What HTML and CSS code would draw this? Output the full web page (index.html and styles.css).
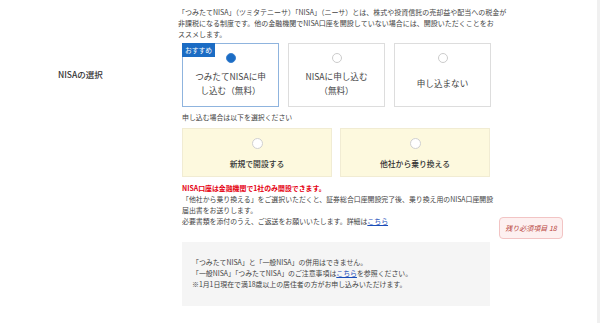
FILE: index.html
```html
<!DOCTYPE html>
<html lang="ja">
<head>
<meta charset="utf-8">
<link rel="stylesheet" href="styles.css">
</head>
<body>
<div class="page">
  <div class="main">
    <div class="form">
      <p class="intro">「つみたてNISA」（ツミタテニーサ）「NISA」（ニーサ）とは、株式や投資信託の売却益や配当への税金が<br>非課税になる制度です。他の金融機関でNISA口座を開設していない場合には、開設いただくことをお<br>ススメします。</p>
      <div class="label">NISAの選択</div>
      <div class="choices">
        <div class="choice selected">
          <span class="rec">おすすめ</span>
          <span class="radio on"></span>
          <span class="choice-text">つみたてNISAに申<br>し込む（無料）</span>
        </div>
        <div class="choice">
          <span class="radio"></span>
          <span class="choice-text">NISAに申し込む<br>（無料）</span>
        </div>
        <div class="choice">
          <span class="radio"></span>
          <span class="choice-text">申し込まない</span>
        </div>
      </div>
      <div class="rest">
        <p class="hint">申し込む場合は以下を選択ください</p>
        <div class="subchoices">
          <div class="sub">
            <span class="radio"></span>
            <span class="sub-text">新規で開設する</span>
          </div>
          <div class="sub">
            <span class="radio"></span>
            <span class="sub-text">他社から乗り換える</span>
          </div>
        </div>
        <div class="note">
          <p class="warn">NISA口座は金融機関で1社のみ開設できます。</p>
          <p>「他社から乗り換える」をご選択いただくと、証券総合口座開設完了後、乗り換え用のNISA口座開設<br>届出書をお送りします。<br>必要書類を添付のうえ、ご返送をお願いいたします。詳細は<a href="#">こちら</a></p>
        </div>
        <div class="info">
          <p>「つみたてNISA」と「一般NISA」の併用はできません。<br>「一般NISA」「つみたてNISA」のご注意事項は<a href="#">こちら</a>を参照ください。<br>※1月1日現在で満18歳以上の居住者の方がお申し込みいただけます。</p>
        </div>
      </div>
    </div>
    <div class="remain">残り必須項目 18</div>
  </div>
  <div class="track"></div>
</div>
</body>
</html>
```

FILE: styles.css
```css
html, body {
  margin: 0;
  padding: 0;
  background: #fff;
}
body {
  font-family: "Noto Sans CJK JP", "Noto Sans", sans-serif;
  color: #333;
}
p { margin: 0; }

.page {
  display: flex;
  height: 323px;
  overflow: hidden;
}
.main {
  position: relative;
  flex: 1;
  padding-top: 7px;
}
.track {
  width: 3px;
  background: #f0f0f0;
}

.form {
  display: grid;
  grid-template-columns: 182px 309px;
}
.intro {
  grid-column: 2;
  grid-row: 1;
  margin-left: -4px;
  font-size: 7px;
  line-height: 11px;
  white-space: nowrap;
  color: #444;
}
.label {
  grid-column: 1;
  grid-row: 2;
  align-self: center;
  padding-left: 58px;
  font-size: 8.5px;
  font-weight: 500;
  color: #333;
}
.choices {
  grid-column: 2;
  grid-row: 2;
  margin-top: 3px;
  display: grid;
  grid-template-columns: repeat(3, 1fr);
  gap: 9px;
}
.choice {
  position: relative;
  height: 64px;
  box-sizing: border-box;
  border: 1px solid #ddd;
  background: #fff;
  display: flex;
  flex-direction: column;
  align-items: center;
  padding: 9px 0 4px;
}
.choice.selected {
  border-color: #8fb4de;
}
.rec {
  position: absolute;
  left: -1px;
  top: -1px;
  width: 33px;
  height: 14px;
  background: #1b6cc4;
  color: #fff;
  font-size: 6.8px;
  line-height: 14px;
  text-align: center;
}
.radio {
  display: block;
  width: 10px;
  height: 10px;
  border-radius: 50%;
  border: 1px solid #ccc;
  background: #fff;
  box-sizing: border-box;
  flex: none;
}
.radio.on {
  background: #1b6cc4;
  border-color: #3d82cf;
}
.choice-text {
  flex: 1;
  display: flex;
  align-items: center;
  text-align: center;
  font-size: 8.6px;
  line-height: 14px;
  color: #444;
}

.rest {
  grid-column: 2;
  grid-row: 3;
}
.hint {
  margin-top: 5px;
  font-size: 6.9px;
  line-height: 11px;
  color: #444;
}
.subchoices {
  margin-top: 5px;
  display: grid;
  grid-template-columns: 1fr 1fr;
  gap: 8px;
  width: 308px;
}
.sub {
  height: 49px;
  box-sizing: border-box;
  background: #fdf9de;
  border: 1px solid #f1ecd3;
  display: flex;
  flex-direction: column;
  align-items: center;
  padding-top: 9px;
}
.sub .radio {
  width: 11px;
  height: 11px;
  border-color: #d0d0d0;
}
.sub-text {
  margin-top: 9px;
  font-size: 7.8px;
  font-weight: 500;
  line-height: 11px;
  color: #333;
}

.note {
  margin-top: 6px;
  font-size: 6.9px;
  line-height: 11px;
  color: #444;
  white-space: nowrap;
}
.warn {
  color: #e50012;
  font-weight: 700;
}
a {
  color: #1a4db8;
  text-decoration: underline;
}

.info {
  margin-top: 15px;
  width: 308px;
  box-sizing: border-box;
  background: #f5f5f5;
  padding: 15px 10px 16px 10px;
  font-size: 6.9px;
  line-height: 11px;
  color: #444;
  white-space: nowrap;
}

.remain {
  position: absolute;
  left: 499px;
  top: 217px;
  width: 64px;
  height: 22px;
  box-sizing: border-box;
  background: #fdf0f0;
  border: 1px solid #f2c4c4;
  border-radius: 4px;
  color: #b8443c;
  font-size: 7px;
  font-style: italic;
  line-height: 20px;
  text-align: center;
}
```
